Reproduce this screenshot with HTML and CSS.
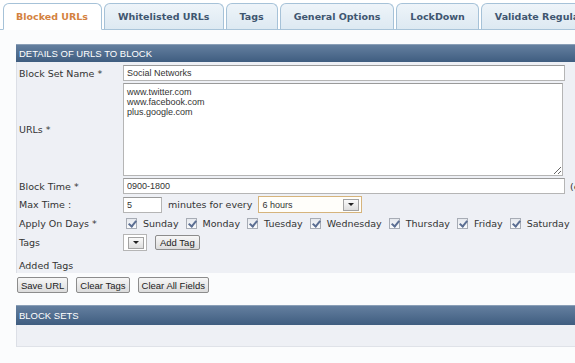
FILE: index.html
```html
<!DOCTYPE html>
<html lang="en">
<head>
    <meta charset="UTF-8">
    <title>Block Site Options</title>
    <link rel="stylesheet" href="styles.css">
</head>
<body>
    <div class="tabs">
        <div class="tab active">Blocked URLs</div>
        <div class="tab">Whitelisted URLs</div>
        <div class="tab">Tags</div>
        <div class="tab">General Options</div>
        <div class="tab">LockDown</div>
        <div class="tab">Validate Regular Expressions</div>
    </div>

    <div class="page">
        <div class="panel">
            <div class="panel-header">Details of URLs to block</div>
            <div class="panel-body">
                <div class="row">
                    <label>Block Set Name *</label>
                    <input type="text" class="wide" value="Social Networks">
                </div>
                <div class="row">
                    <label>URLs *</label>
                    <textarea class="urls">www.twitter.com
www.facebook.com
plus.google.com</textarea>
                </div>
                <div class="row">
                    <label>Block Time *</label>
                    <input type="text" class="wide" value="0900-1800">
                    <span class="hint">(e.g. 0900-1800)</span>
                </div>
                <div class="row">
                    <label>Max Time :</label>
                    <input type="text" class="short" value="5">
                    <span class="text">minutes for every</span>
                    <div class="select focused">
                        <span>6 hours</span>
                        <span class="drop"><i></i></span>
                    </div>
                </div>
                <div class="row">
                    <label>Apply On Days *</label>
                    <div class="days">
                        <span class="day"><input type="checkbox" checked>Sunday</span>
                        <span class="day"><input type="checkbox" checked>Monday</span>
                        <span class="day"><input type="checkbox" checked>Tuesday</span>
                        <span class="day"><input type="checkbox" checked>Wednesday</span>
                        <span class="day"><input type="checkbox" checked>Thursday</span>
                        <span class="day"><input type="checkbox" checked>Friday</span>
                        <span class="day"><input type="checkbox" checked>Saturday</span>
                    </div>
                </div>
                <div class="row">
                    <label>Tags</label>
                    <div class="select tiny">
                        <span></span>
                        <span class="drop"><i></i></span>
                    </div>
                    <button class="add-tag">Add Tag</button>
                </div>
                <div class="row added">
                    <label>Added Tags</label>
                </div>
            </div>
        </div>

        <div class="actions">
            <button>Save URL</button>
            <button>Clear Tags</button>
            <button>Clear All Fields</button>
        </div>

        <div class="panel sets">
            <div class="panel-header">Block Sets</div>
            <div class="panel-body empty"></div>
        </div>
    </div>
</body>
</html>
```

FILE: styles.css
```css
html {
    overflow: hidden;
}
body {
    margin: 0;
    background-color: #fbfcfd;
    font-family: "DejaVu Sans", Verdana, sans-serif;
    font-size: 9.5px;
    color: #333;
    width: 620px;
    overflow: hidden;
}
.tabs {
    display: flex;
    gap: 2px;
    height: 29px;
    padding: 0 0 0 3px;
    border-bottom: 1px solid #a9c4d9;
    background-color: #fff;
    align-items: flex-end;
    white-space: nowrap;
}
.tab {
    height: 25px;
    line-height: 26px;
    padding: 0 13px;
    margin-bottom: -1px;
    border: 1px solid #a6c2d8;
    border-bottom: 1px solid #a9c4d9;
    border-radius: 6px 6px 0 0;
    background: linear-gradient(#eef4f9, #dde9f2);
    color: #3f5670;
    font-weight: bold;
    font-size: 9.5px;
}
.tab.active {
    background: #fff;
    color: #d4823f;
    border-bottom-color: #fff;
    padding: 0 13px 0 12px;
}
.page {
    padding: 14px 0 0 16px;
}
.panel-header {
    height: 17px;
    line-height: 18px;
    padding-left: 3px;
    background: linear-gradient(#647f9f, #3f5d80);
    border-top: 1px solid #8a9fb7;
    color: #fff;
    text-transform: uppercase;
    font-family: "Liberation Sans", Arial, sans-serif;
    font-size: 9.5px;
}
.panel-body {
    background-color: #eef0f5;
    border-left: 1px solid #dcdfe6;
    padding: 3px 0 0 0;
    height: 208px;
}
.row {
    display: flex;
    align-items: center;
    margin-bottom: 2px;
    white-space: nowrap;
}
.row label {
    width: 104px;
    padding-left: 2px;
    flex-shrink: 0;
}
input[type="text"], textarea {
    font-family: "Liberation Sans", Arial, sans-serif;
    font-size: 9px;
    color: #333;
    border: 1px solid #b5b5b5;
    border-top-color: #9a9a9a;
    background: #fff;
    box-sizing: border-box;
    padding: 0 3px;
    margin: 0;
    flex-shrink: 0;
}
input.wide {
    width: 442px;
    height: 16px;
}
textarea.urls {
    width: 440px;
    height: 93px;
    resize: both;
    padding: 3px 3px;
    line-height: 10px;
}
.hint {
    margin-left: 5px;
    color: #333;
}
input.short {
    width: 39px;
    height: 16px;
}
.text {
    margin: 0 6px 0 6px;
}
.select {
    display: flex;
    align-items: center;
    justify-content: space-between;
    box-sizing: border-box;
    height: 17px;
    border: 1px solid #b5b5b5;
    background: #fff;
    font-family: "Liberation Sans", Arial, sans-serif;
    font-size: 9px;
    flex-shrink: 0;
}
.select.focused {
    width: 104px;
    border-color: #d6b47c;
    padding-left: 3px;
    background: #fffefa;
}
.drop {
    width: 16px;
    height: 12px;
    margin-right: 2px;
    border: 1px solid #a3a3a3;
    box-sizing: border-box;
    background: linear-gradient(#fafafa, #dedede);
    display: flex;
    align-items: center;
    justify-content: center;
}
.drop i {
    width: 0;
    height: 0;
    border-left: 3px solid transparent;
    border-right: 3px solid transparent;
    border-top: 3px solid #222;
}
.select.tiny {
    width: 24px;
}
.days {
    display: flex;
    align-items: center;
    height: 17px;
    margin-left: 3px;
}
.day {
    display: flex;
    align-items: center;
    margin-right: 7px;
}
.day input {
    appearance: none;
    -webkit-appearance: none;
    width: 11px;
    height: 11px;
    margin: 0 6px 0 0;
    border: 1px solid #a7acb5;
    background: linear-gradient(#e6e9ee, #fafbfc);
    position: relative;
}
.day input:checked::after {
    content: "";
    position: absolute;
    left: 3px;
    top: 0px;
    width: 3px;
    height: 6px;
    border: solid #5c6f93;
    border-width: 0 2px 2px 0;
    transform: rotate(40deg);
}
button {
    font-family: "Liberation Sans", Arial, sans-serif;
    font-size: 9.5px;
    color: #222;
    height: 16px;
    padding: 0 3px;
    border: 1px solid #8c8c8c;
    border-radius: 2px;
    background: linear-gradient(#f7f7f7, #dcdcdc);
    cursor: pointer;
}
.add-tag {
    margin-left: 8px;
    height: 15px;
    padding: 0 4px;
}
.row.added {
    height: 16px;
    margin-top: 6px;
}
.actions {
    display: flex;
    gap: 8px;
    margin: 4px 0 0 1px;
}
.sets {
    margin-top: 12px;
}
.sets .panel-header {
    height: 19px;
    line-height: 20px;
}
.panel-body.empty {
    height: 21px;
    padding: 0;
    border-bottom: 1px solid #dfe2e8;
}
```
